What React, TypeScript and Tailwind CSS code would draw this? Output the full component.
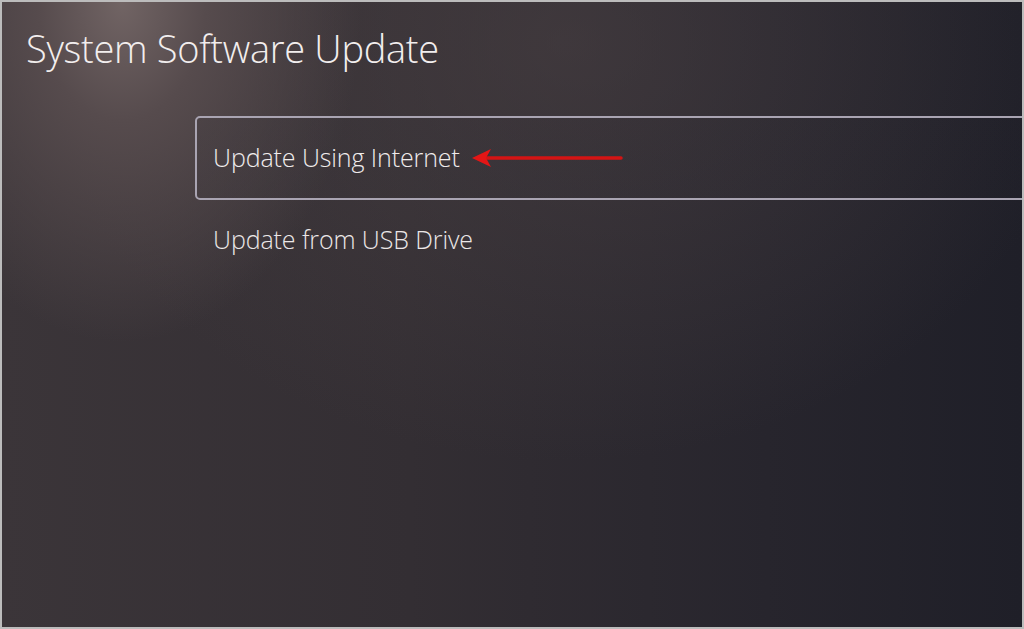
import React from "react";

export default function App() {
  return (
    <div className="w-[1024px] h-[629px] border-2 border-[#bcbcbc] overflow-hidden bg-[#c0c0c0]">
      <div
        className="relative w-full h-full overflow-hidden bg-[radial-gradient(ellipse_240px_340px_at_120px_0px,#716464_0%,#564b4d_35%,rgba(60,52,56,0)_100%),radial-gradient(ellipse_520px_420px_at_560px_40px,rgba(80,70,72,0.5)_0%,rgba(50,45,50,0)_100%),linear-gradient(90deg,#3b3539_0%,#332e33_40%,#27252d_75%,#1f1f28_100%)]"
        style={{ fontFamily: '"Open Sans", "Noto Sans", sans-serif' }}
      >
        <div className="pt-[18px] pl-[24px]">
          <h1 className="text-[38px] font-light text-[#f2eeee] leading-[56px] tracking-[-0.3px]">
            System Software Update
          </h1>
        </div>
        <div className="mt-[40px] ml-[193px] -mr-[4px] flex flex-col">
          <div className="h-[84px] rounded-[5px] border-2 border-[#a9a4b2] flex items-center pl-[16px] bg-[linear-gradient(90deg,rgba(60,55,60,0.25),rgba(30,30,40,0.1))]">
            <span className="text-[25px] font-light text-[#f0ecec] tracking-[-0.1px]">
              Update Using Internet
            </span>
            <svg width="152" height="22" viewBox="0 0 152 22" className="ml-[12px]">
              <line x1="12" y1="11" x2="149" y2="11" stroke="#d41414" strokeWidth="3.5" strokeLinecap="round" />
              <path d="M0 11 L19 2 L14 11 L19 20 Z" fill="#e41616" />
            </svg>
          </div>
          <div className="h-[80px] flex items-center pl-[18px]">
            <span className="text-[25px] font-light text-[#ebe7e7] tracking-[-0.1px]">
              Update from USB Drive
            </span>
          </div>
        </div>
      </div>
    </div>
  );
}
